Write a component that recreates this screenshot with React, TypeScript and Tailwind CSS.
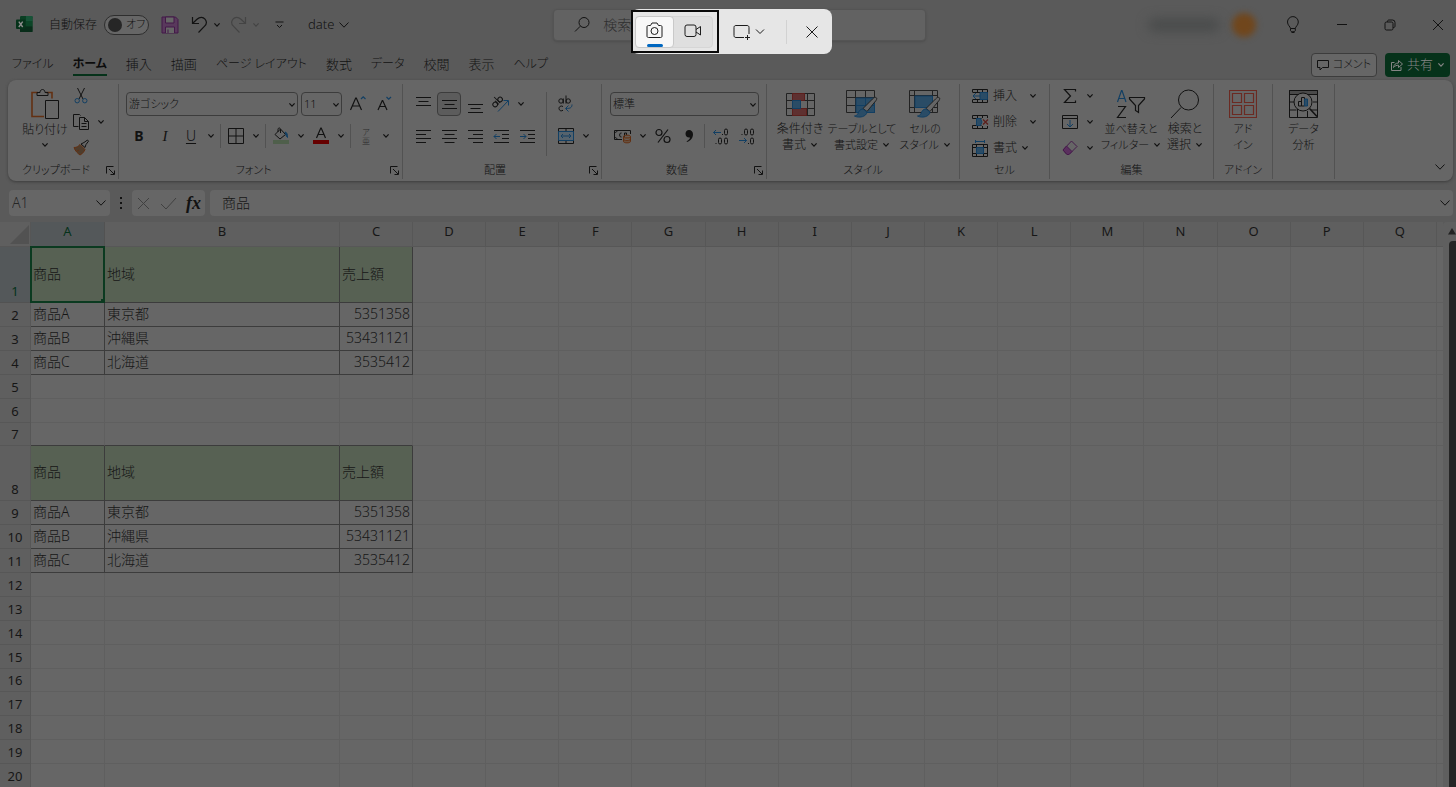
import React from "react";

type IconProps = { w?: number; h?: number; className?: string; children: React.ReactNode; sw?: number };

function Icon({ w = 16, h = 16, className = "", children, sw = 1 }: IconProps) {
  return (
    <svg
      width={w}
      height={h}
      viewBox={`0 0 ${w} ${h}`}
      fill="none"
      stroke="currentColor"
      strokeWidth={sw}
      className={`shrink-0 ${className}`}
      aria-hidden="true"
    >
      {children}
    </svg>
  );
}

const BLUE = "#123f63";
const BLUE_FILL = "#2a4c66";
const RED = "#5c1f1c";
const RED_FILL = "#5e3030";
const ORANGE = "#633012";

function Chevron({ className = "" }: { className?: string }) {
  return (
    <Icon w={8} h={6} sw={1.2} className={className}>
      <path d="M1.4 1.4 4 4.2 6.6 1.4" />
    </Icon>
  );
}

function BigChevron({ className = "" }: { className?: string }) {
  return (
    <Icon w={12} h={8} className={className}>
      <path d="M1.5 1.5 6 6.2 10.5 1.5" />
    </Icon>
  );
}

function ToolButton({ label, children, on = false }: { label: string; children: React.ReactNode; on?: boolean }) {
  return (
    <button
      type="button"
      aria-label={label}
      aria-pressed={on}
      className={
        on
          ? "mx-px flex h-6 w-6 items-center justify-center rounded border border-[#3c3c3c] bg-[#5c5c5c]"
          : "flex h-6 w-[26px] items-center justify-center"
      }
    >
      {children}
    </button>
  );
}

function DropButton({ label }: { label: string }) {
  return (
    <button type="button" aria-label={label} className="flex h-6 w-3.5 items-center justify-center">
      <Chevron />
    </button>
  );
}

function Separator({ tall = false }: { tall?: boolean }) {
  return <div className={tall ? "mx-1.5 h-16 w-px bg-[#525252]" : "mx-0.5 h-6 w-px bg-[#525252]"} />;
}

function Group({
  label,
  width,
  launcher = false,
  children,
}: {
  label: string;
  width: string;
  launcher?: boolean;
  children: React.ReactNode;
}) {
  return (
    <section aria-label={label || "データ分析"} className={`flex shrink-0 flex-col border-r border-[#525252] ${width}`}>
      <div className="flex h-[77px] justify-center">{children}</div>
      <div className="flex h-[18px] items-center">
        <span className="flex-1 text-center text-[11px] leading-4">{label}</span>
        {launcher && (
          <button type="button" aria-label={`${label}の設定`} className="mr-0.5 flex h-3 w-3 items-center justify-center">
            <Icon w={9} h={9}>
              <path d="M.5 7.500V.5H7.500M3 3 8 8M8.500 4.500v4H4.500" />
            </Icon>
          </button>
        )}
      </div>
    </section>
  );
}

function LargeButton({
  icon,
  lines,
  drop = false,
  width,
  kana = false,
}: {
  icon: React.ReactNode;
  lines: [string, string];
  drop?: boolean;
  width: string;
  kana?: boolean;
}) {
  return (
    <button
      type="button"
      className={`flex shrink-0 flex-col items-center pt-1 leading-4 whitespace-nowrap ${kana ? "text-[11px]" : "text-xs"} ${width}`}
    >
      <span className="flex h-[31px] items-center justify-center">{icon}</span>
      <span className="mt-0.5 leading-4">{lines[0]}</span>
      <span className="flex items-center gap-1">
        {lines[1]}
        {drop && <Chevron />}
      </span>
    </button>
  );
}

/* ---------- drawings ---------- */

function ExcelLogo() {
  return (
    <Icon w={17} h={17}>
      <rect x="4" y="0" width="12.500" height="16" rx="1.200" fill="#0a3f23" stroke="none" />
      <rect x="10" y="0" width="6.500" height="5" fill="#175337" stroke="none" />
      <rect x="10" y="5" width="6.500" height="5.500" fill="#0c4527" stroke="none" />
      <rect x="4" y="10.500" width="12.500" height="5.500" fill="#082c19" stroke="none" />
      <rect x="0" y="3.500" width="9.500" height="9.500" rx="1" fill="#06321a" stroke="none" />
      <path d="M2.800 5.600 6.700 11M6.700 5.600 2.800 11" stroke="#8c8c8c" strokeWidth="1.400" />
    </Icon>
  );
}

const alignPaths = {
  top: "M1 1.500h15M3.500 5.500h10M1 9.500h15",
  middle: "M1 4.500h15M3.500 8.500h10M1 12.500h15",
  bottom: "M1 8.500h15M3.500 12.500h10M1 16.500h15",
  left: "M1 2.500h15M1 6.500h10M1 10.500h15M1 14.500h10",
  center: "M1 2.500h15M3.500 6.500h10M1 10.500h15M3.500 14.500h10",
  right: "M1 2.500h15M6 6.500h10M1 10.500h15M6 14.500h10",
};

function AlignIcon({ kind }: { kind: keyof typeof alignPaths }) {
  return (
    <Icon w={17} h={17}>
      <path d={alignPaths[kind]} />
    </Icon>
  );
}

function IndentIcon({ out = false }: { out?: boolean }) {
  return (
    <Icon w={17} h={17}>
      <path d="M1 2.500h15M9 6.500h7M9 10.500h7M1 14.500h15" />
      <path stroke={BLUE} d={out ? "M7 8.500H1M3.500 6 1 8.500 3.500 11" : "M1 8.500h6M4.500 6 7 8.500 4.500 11"} />
    </Icon>
  );
}

function CondFormatIcon() {
  return (
    <Icon w={29} h={26} className="text-[#222]">
      <path d="M.5 2.500h28v22H.5zM.5 9.500h28M.5 17.500h28M6.500 2.500v22M21.500 2.500v22" />
      <path fill={RED_FILL} stroke={RED} d="M6.500 2.500h12v7h-12zM6.500 17.500h14v7h-14z" />
      <path fill={BLUE_FILL} stroke={BLUE} d="M6.500 9.500h8v8h-8z" />
    </Icon>
  );
}

function Brush() {
  return (
    <g>
      <path fill="#666" stroke="#222" d="M30 8.500c1 .5 1 1.500 0 3l-9 11-4-3 9.500-9.500c1.500-1.500 2.500-2 3.500-1.500Z" />
      <path fill={BLUE_FILL} stroke={BLUE} d="M17 20c-3 0-4 2-5 4.500-.8 1.800-2 2.200-3.500 2.500 5 2.500 12 .5 12.500-4Z" />
    </g>
  );
}

function TableFormatIcon() {
  return (
    <Icon w={32} h={30} className="text-[#222]">
      <path d="M.5 1.500h28v22H.5zM.5 8.500h28M.5 16.500h28M9.500 1.500v22M19.500 1.500v22" />
      <path fill={BLUE_FILL} stroke={BLUE} d="M10 9h18.500v14.500H10zM19.500 9v14M10 16.500h18" />
      <Brush />
    </Icon>
  );
}

function CellStyleIcon() {
  return (
    <Icon w={32} h={30} className="text-[#222]">
      <path d="M.5 1.500h28v22H.5zM.5 6.500h28M.5 18.500h28M5.500 1.500v22M23.500 1.500v22" />
      <path fill={BLUE_FILL} stroke={BLUE} d="M6 7h17.500v11.500H6z" />
      <Brush />
    </Icon>
  );
}

function CellOpIcon({ kind }: { kind: "insert" | "delete" | "format" }) {
  return (
    <Icon w={17} h={17}>
      {kind === "insert" && (
        <>
          <path d="M.5 4V1.500h15v13H.5V12M5.500 1.500v3M10.500 1.500v13M.5 11.500h15M5.500 11v3.500M.5 4.500h15" />
          <path fill={BLUE_FILL} stroke={BLUE} d="M8 4.500h7.500v7H8z" />
          <path stroke={BLUE} d="M8 8H1M4 5 1 8l3 3" />
        </>
      )}
      {kind === "delete" && (
        <>
          <path d="M.5 1.500h15V4M.5 14.500h15V12M.5 1.500v3h9M.5 14.500v-3h9M5.500 1.500v13M10.500 1.500V4M10.500 12v2.500" />
          <path fill={BLUE_FILL} stroke={BLUE} d="M4.500 4.500h4L10 8l-1.500 3.500h-4z" />
          <path stroke={RED} strokeWidth="1.300" d="m11 5.500 5 5M16 5.500l-5 5" />
        </>
      )}
      {kind === "format" && (
        <>
          <path d="M.5 4.500h15v12H.5zM.5 7.500h15M.5 13.500h15M4.500 4.500v12M11.500 4.500v12" />
          <path fill={BLUE_FILL} stroke={BLUE} d="M4.500 7.500h7v6h-7z" />
          <path stroke={BLUE} d="M3.500 1.500h9M3.500 0v3M12.500 0v3" />
        </>
      )}
    </Icon>
  );
}

function ColorA() {
  return (
    <Icon w={18} h={18}>
      <path strokeWidth="1.200" d="M4.500 11 8.800 1h.4l4.300 10M6 7.500h6" />
      <path fill="#660000" stroke="none" d="M1 13h16v4H1z" />
    </Icon>
  );
}

/* ---------- page sections ---------- */

function TitleBar() {
  return (
    <header className="flex h-[49px] shrink-0 items-center">
      <div className="flex w-[38%] shrink-0 items-center pl-4">
        <ExcelLogo />
        <label className="ml-4 flex items-center gap-[7px] text-xs">
          自動保存
          <input type="checkbox" role="switch" className="peer sr-only" />
          <span className="flex h-5 w-[45px] items-center gap-1 rounded-full border border-[#2e2e2e] bg-[#666] pl-[3px] text-[11px]">
            <span className="h-3.5 w-3.5 rounded-full bg-[#262626]" />
            オフ
          </span>
        </label>
        <button type="button" aria-label="上書き保存" className="ml-3">
          <Icon w={18} h={18} className="text-[#431948]">
            <path fill="#59395c" d="M1 1h13.500L17 3.500V17H1z" />
            <path fill="#666" d="M4.500 1h8.500v6H4.500zM4.500 17v-6h9v6" />
            <path d="M7 17v-3.500" />
          </Icon>
        </button>
        <button type="button" aria-label="元に戻す" className="ml-3">
          <Icon w={17} h={18} sw={1.2}>
            <path d="M1.500 1v6.500H8M1.500 7.500 6 3.200c3-2.600 6.200-2.200 8 0 1.900 2.300 1.600 5-.4 7L7.500 16.500" />
          </Icon>
        </button>
        <span className="ml-0.5 flex"><DropButton label="元に戻す履歴" /></span>
        <button type="button" aria-label="やり直し" className="ml-1.5 text-[#444]">
          <Icon w={17} h={18} sw={1.2}>
            <path d="M15.500 1v6.500H9M15.500 7.500 11 3.200c-3-2.600-6.200-2.200-8 0-1.900 2.300-1.600 5 .4 7L9.500 16.500" />
          </Icon>
        </button>
        <span className="ml-0.5 flex text-[#444]"><DropButton label="やり直し履歴" /></span>
        <button type="button" aria-label="クイック アクセスのカスタマイズ" className="ml-3">
          <Icon w={9} h={8}>
            <path d="M.5 1h8M2 4l2.500 2.500L7 4" />
          </Icon>
        </button>
        <button type="button" className="ml-6 flex items-center gap-1 text-[13px]">
          date
          <BigChevron />
        </button>
      </div>
      <label className="flex h-8 w-[25.6%] shrink-0 items-center gap-3 rounded border border-[#545454] bg-[#626262] pl-5 shadow-sm">
        <Icon w={17} h={17}>
          <circle cx="10" cy="6.500" r="5" />
          <path d="M6.300 10.200 1 15.500" />
        </Icon>
        <input type="search" aria-label="検索" placeholder="検索" className="w-full bg-transparent text-sm text-[#2b2b2b] outline-none placeholder:text-[#2e2e2e]" />
      </label>
      <div className="flex flex-1 items-center justify-end pr-3">
        <div className="mr-3 h-3 w-[72px] rounded-full bg-[#484a4a] blur-[6px]" />
        <div className="mr-[30px] h-6 w-6 rounded-full bg-[#70461c] blur-[3px]" />
        <button type="button" aria-label="ヒント" className="mr-9">
          <Icon w={14} h={18}>
            <path d="M4.500 12.500C4.300 10.500 1.500 9.300 1.500 6a5.300 5.300 0 0 1 10.800 0c0 3.300-2.800 4.500-3 6.500ZM4.500 12.500v2.200c0 1.500 4.800 1.500 4.800 0v-2.200M5.500 16.500h3" />
          </Icon>
        </button>
        <button type="button" aria-label="最小化" className="mr-9">
          <Icon w={12} h={12}><path d="M1 5.500h10" /></Icon>
        </button>
        <button type="button" aria-label="元のサイズに戻す" className="mr-9">
          <Icon w={12} h={12}>
            <rect x="1" y="3" width="8" height="8" rx="1.500" />
            <path d="M3.500 3V2.500C3.500 1.500 4 1 5 1h3.500A2.500 2.500 0 0 1 11 3.500V7c0 1-.5 1.500-1.500 1.500H9" />
          </Icon>
        </button>
        <button type="button" aria-label="閉じる">
          <Icon w={12} h={12}><path d="m1 1 10 10M11 1 1 11" /></Icon>
        </button>
      </div>
    </header>
  );
}

const tabs = [
  { name: "ファイル", kana: true },
  { name: "ホーム", kana: true, current: true },
  { name: "挿入" },
  { name: "描画" },
  { name: "ページ レイアウト", kana: true },
  { name: "数式" },
  { name: "データ", kana: true },
  { name: "校閲" },
  { name: "表示" },
  { name: "ヘルプ", kana: true },
];

function TabRow() {
  return (
    <div className="flex h-[31px] shrink-0 items-center justify-between pr-1.5 pl-3">
      <nav aria-label="リボン タブ" className="flex items-center gap-[19px] leading-5">
        {tabs.map((t) => (
          <a
            key={t.name}
            href="#"
            aria-current={t.current ? "page" : undefined}
            className={`border-b-2 ${t.kana ? "text-xs" : "text-[13px]"} leading-5 ${
              t.current ? "border-[#06321a] font-bold text-[#0c0c0c]" : "border-transparent"
            }`}
          >
            {t.name}
          </a>
        ))}
      </nav>
      <div className="flex items-center gap-2 text-[13px]">
        <button type="button" className="flex h-6 w-[66px] items-center justify-center gap-1 rounded border border-[#3c3c3c] bg-[#666] text-[11px] whitespace-nowrap">
          <Icon w={12} h={12}>
            <path d="M.5 1.500h11v7H5.500L3 11V8.500H.5z" />
          </Icon>
          コメント
        </button>
        <button type="button" className="flex h-6 w-[65px] items-center justify-center gap-1 rounded bg-[#06321a] whitespace-nowrap text-[#858585]">
          <Icon w={13} h={13}>
            <path d="M4.500 4.500h-3v8h9.500V9M3.500 9.500c.5-3 2.200-4.500 5-4.500V2.500l4 3.500-4 3.500V7.200c-2 0-3.500.6-5 2.300Z" />
          </Icon>
          共有
          <Chevron />
        </button>
      </div>
    </div>
  );
}

function SelectBox({ label, options, width }: { label: string; options: string[]; width: string }) {
  return (
    <span className={`relative flex ${width}`}>
      <select aria-label={label} className="h-6 w-full appearance-none rounded border border-[#3c3c3c] bg-transparent pl-0.5 text-[11px] outline-none">
        {options.map((o) => (
          <option key={o}>{o}</option>
        ))}
      </select>
      <Chevron className="pointer-events-none absolute top-2.5 right-0.5" />
    </span>
  );
}

function Ribbon() {
  return (
    <div className="mr-[3px] ml-2 flex h-[101px] shrink-0 overflow-hidden rounded-lg bg-[#666] pt-1 pb-0.5 shadow-[0_1px_3px_#3d3d3d]">
      <Group label="クリップボード" width="w-[111px]" launcher>
        <div className="flex w-full pl-3.5">
          <button type="button" className="flex w-[46px] flex-col items-center pt-1 text-xs leading-4 whitespace-nowrap">
            <Icon w={30} h={32}>
              <path stroke={ORANGE} strokeWidth="1.600" d="M8 4.500H2v24h12M16 4.500h6v6" />
              <path d="M7 7.500V4.500h3c0-4 5-4 5 0h3v3z" />
              <path d="M15.500 12.500h13v18h-13z" />
            </Icon>
            <span className="mt-0.5">貼り付け</span>
            <Chevron className="mt-1" />
          </button>
          <div className="flex flex-col gap-0.5">
            <ToolButton label="切り取り">
              <Icon w={16} h={18}>
                <path d="M4.500 1 10 12M11.500 1 6 12" />
                <g stroke={BLUE}><circle cx="4.200" cy="13.700" r="2.200" /><circle cx="11.800" cy="13.700" r="2.200" /></g>
              </Icon>
            </ToolButton>
            <div className="flex">
              <ToolButton label="コピー">
                <Icon w={18} h={18}>
                  <path d="M6.500 13.500H1.500v-12h6l1 1M7.500 4.500h5l4 4v8h-9zM12.500 4.500v4h4M9.500 10.500h5M9.500 13.500h5" />
                </Icon>
              </ToolButton>
              <DropButton label="コピーのオプション" />
            </div>
            <ToolButton label="書式のコピー">
              <Icon w={18} h={18}>
                <path d="m9 5 3-1.500L15.500 1l1 1.200L14 5.500l-1 3Z" />
                <path fill="#4e3c2c" stroke={ORANGE} d="M2 8.500c3 0 4-1 6-3l5 5c-1 2-2 4-5 5.500C6 14.500 3 12 2 8.500ZM5 12l2-1" />
              </Icon>
            </ToolButton>
          </div>
        </div>
      </Group>

      <Group label="フォント" width="w-[284px]" launcher>
        <div className="flex w-full flex-col gap-2 pt-2 pl-[7px]">
          <div className="flex gap-[3px]">
            <SelectBox label="フォント名" options={["游ゴシック"]} width="w-[172px]" />
            <SelectBox label="フォント サイズ" options={["11"]} width="w-[41px]" />
            <div className="flex">
              <ToolButton label="フォント サイズの拡大">
                <Icon w={18} h={18} sw={1.2}>
                  <path d="M1.500 15 6.700 3h.6l5.200 12M3.500 11h7" />
                  <path stroke={BLUE} d="m12 4 2.200-2.200L16.500 4" />
                </Icon>
              </ToolButton>
              <ToolButton label="フォント サイズの縮小">
                <Icon w={16} h={18} sw={1.2}>
                  <path d="M2 15 6.300 5.500h.4L11 15M3.500 11.500h6" />
                  <path stroke={BLUE} d="m10.500 2 2.200 2.200L15 2" />
                </Icon>
              </ToolButton>
            </div>
          </div>
          <div className="flex">
            <ToolButton label="太字"><span className="text-sm font-bold">B</span></ToolButton>
            <ToolButton label="斜体"><span className="font-['Liberation_Serif',serif] text-[15px] italic">I</span></ToolButton>
            <ToolButton label="下線"><span className="text-sm underline underline-offset-2">U</span></ToolButton>
            <DropButton label="下線の種類" />
            <Separator />
            <ToolButton label="罫線">
              <Icon w={16} h={16}><path d="M.5.5h15v15H.5zM8 .5v15M.5 8h15" /></Icon>
            </ToolButton>
            <DropButton label="罫線の種類" />
            <Separator />
            <ToolButton label="塗りつぶしの色">
              <Icon w={18} h={18}>
                <path d="M3 7.500 8.500 2l5 5.500L8 12ZM6 5V2.500c0-2 2.500-2 2.500 0V6" />
                <path fill={BLUE} stroke={BLUE} d="M13 5c2 .5 2.500 2 2.500 5.500-1.500-1-1.500-3-2.500-5.500Z" />
                <path fill="#4f5f4b" stroke="none" d="M1 13h16v4H1z" />
              </Icon>
            </ToolButton>
            <DropButton label="塗りつぶしの色の選択" />
            <ToolButton label="フォントの色"><ColorA /></ToolButton>
            <DropButton label="フォントの色の選択" />
            <Separator />
            <ToolButton label="ふりがな">
              <span className="flex flex-col items-center text-[8px] leading-[9px] text-[#2c2c2c]">
                <span>ア</span>
                <span>亜</span>
              </span>
            </ToolButton>
            <DropButton label="ふりがなの設定" />
          </div>
        </div>
      </Group>

      <Group label="配置" width="w-[199px]" launcher>
        <div className="flex w-full pt-2 pl-[7px]">
          <div className="flex flex-col gap-2">
            <div className="flex">
              <ToolButton label="上揃え"><AlignIcon kind="top" /></ToolButton>
              <ToolButton label="上下中央揃え" on><AlignIcon kind="middle" /></ToolButton>
              <ToolButton label="下揃え"><AlignIcon kind="bottom" /></ToolButton>
              <ToolButton label="方向">
                <Icon w={18} h={18}>
                  <g transform="rotate(-45 6 8)">
                    <circle cx="3" cy="7" r="2.300" /><path d="M5.500 4.500v5M7.500 1v8.500" /><circle cx="10" cy="7" r="2.300" />
                  </g>
                  <path stroke={BLUE} d="M6 16.500 16 6M11.500 5.500H16.500V10.500" />
                </Icon>
              </ToolButton>
              <DropButton label="方向の種類" />
            </div>
            <div className="flex">
              <ToolButton label="左揃え"><AlignIcon kind="left" /></ToolButton>
              <ToolButton label="中央揃え"><AlignIcon kind="center" /></ToolButton>
              <ToolButton label="右揃え"><AlignIcon kind="right" /></ToolButton>
              <ToolButton label="インデントを減らす"><IndentIcon out /></ToolButton>
              <ToolButton label="インデントを増やす"><IndentIcon /></ToolButton>
            </div>
          </div>
          <Separator tall />
          <div className="flex flex-col gap-2">
            <ToolButton label="折り返して全体を表示する">
              <Icon w={18} h={18}>
                <circle cx="4" cy="6" r="2.200" /><path d="M6.300 3.500v5M9 .5v8" /><circle cx="11.200" cy="6" r="2.200" />
                <path d="M6 11.500c-2.200-1.200-4 0-4 2s2 3 4 1.800" />
                <path stroke={BLUE} d="M15 9.500c0 3-1.500 4-6 4M11.500 10.500l-3 3 3 3" />
              </Icon>
            </ToolButton>
            <div className="flex">
              <ToolButton label="セルを結合して中央揃え">
                <Icon w={16} h={16}>
                  <path d="M.5.5h15v15H.5zM.5 3.500h15M.5 12.500h15M8 .5v3M8 12.500v3" />
                  <path fill="#56636d" stroke={BLUE} d="M.5 3.500h15v9H.5zM3 8h10M5 6 3 8l2 2M11 6l2 2-2 2" />
                </Icon>
              </ToolButton>
              <DropButton label="結合の種類" />
            </div>
          </div>
        </div>
      </Group>

      <Group label="数値" width="w-[165px]" launcher>
        <div className="flex w-full flex-col gap-2 pt-2 pl-2">
          <SelectBox label="表示形式" options={["標準"]} width="w-[149px]" />
          <div className="flex">
            <ToolButton label="通貨表示形式">
              <Icon w={18} h={16}>
                <path d="M8 11.500H.5v-9h16V6M3 2.500c0 1.500-1 2-2.500 2M.5 9.500c1.500 0 2.500.5 2.500 2M7.500 5C5 4.500 5 9.500 7.500 9M10.500 9V5h2v2" />
                <path fill="#66503f" stroke={ORANGE} d="M9.500 8.500c0-1.800 7-1.800 7 0v5c0 1.800-7 1.800-7 0zM9.500 8.500c0 1.800 7 1.800 7 0M9.500 11c0 1.800 7 1.800 7 0" />
              </Icon>
            </ToolButton>
            <DropButton label="通貨の種類" />
            <ToolButton label="パーセント スタイル">
              <Icon w={16} h={16} sw={1.2}>
                <circle cx="4" cy="4.500" r="3" /><circle cx="12" cy="11.500" r="3" /><path d="M13 1.500 3 14.500" />
              </Icon>
            </ToolButton>
            <ToolButton label="桁区切りスタイル">
              <Icon w={10} h={14}>
                <path fill="currentColor" stroke="none" d="M5 1c2.300 0 4 1.700 4 4.300 0 3.500-2.300 6.500-6 7.700l-.4-.8c2-.9 3.200-2.100 3.400-3.700C3.300 9 1.500 7 1.500 4.800 1.500 2.500 3 1 5 1Z" />
              </Icon>
            </ToolButton>
            <Separator />
            <ToolButton label="小数点以下の表示桁数を増やす">
              <Icon w={17} h={17}>
                <path stroke={BLUE} d="M9 4.500H1.500M4 2 1.500 4.500 4 7" />
                <rect x="12.500" y="1" width="3" height="6" rx="1.500" /><path d="M10.500 6v1M4 15v1" />
                <rect x="6.500" y="10" width="3" height="6" rx="1.500" /><rect x="12.500" y="10" width="3" height="6" rx="1.500" />
              </Icon>
            </ToolButton>
            <ToolButton label="小数点以下の表示桁数を減らす">
              <Icon w={17} h={17}>
                <path stroke={BLUE} d="M1 12.500h7.500M6 10l2.500 2.500L6 15" />
                <rect x="6.500" y="1" width="3" height="6" rx="1.500" /><rect x="12.500" y="1" width="3" height="6" rx="1.500" />
                <path d="M4 6v1M10.500 15v1" /><rect x="12.500" y="10" width="3" height="6" rx="1.500" />
              </Icon>
            </ToolButton>
          </div>
        </div>
      </Group>

      <Group label="スタイル" width="w-[193px]">
        <LargeButton icon={<CondFormatIcon />} lines={["条件付き", "書式"]} drop width="w-[58px]" />
        <LargeButton icon={<TableFormatIcon />} lines={["テーブルとして", "書式設定"]} drop kana width="w-[66px]" />
        <LargeButton icon={<CellStyleIcon />} lines={["セルの", "スタイル"]} drop kana width="w-[60px]" />
      </Group>

      <Group label="セル" width="w-[90px]">
        <div className="flex w-full flex-col gap-0.5 pl-3 text-xs">
          <button type="button" className="flex h-6 items-center gap-1">
            <CellOpIcon kind="insert" />挿入<Chevron className="ml-2" />
          </button>
          <button type="button" className="flex h-6 items-center gap-1">
            <CellOpIcon kind="delete" />削除<Chevron className="ml-2" />
          </button>
          <button type="button" className="flex h-6 items-center gap-1">
            <CellOpIcon kind="format" />書式<Chevron />
          </button>
        </div>
      </Group>

      <Group label="編集" width="w-[164px]">
        <div className="flex w-full pl-[7px]">
          <div className="flex flex-col gap-0.5">
            <div className="flex">
              <ToolButton label="合計">
                <Icon w={15} h={16} sw={1.2}><path d="M12.500 3.500V1.500H1.500L7.500 8l-6 6.500h11v-2" /></Icon>
              </ToolButton>
              <DropButton label="集計方法" />
            </div>
            <div className="flex">
              <ToolButton label="フィル">
                <Icon w={16} h={16}>
                  <path d="M.5 1.500h15v13H.5zM.5 4.500h15" />
                  <path stroke={BLUE} d="M8 6v7M5 10l3 3 3-3" />
                </Icon>
              </ToolButton>
              <DropButton label="フィルの種類" />
            </div>
            <div className="flex">
              <ToolButton label="クリア">
                <Icon w={16} h={16} className="text-[#451b4a]">
                  <path d="M9.500 1 15 6.500 7 14.500H5L1 10Z" />
                  <path fill="#5a2f5e" d="M4.500 6 10 11.500l-3 3H5L1 10Z" />
                </Icon>
              </ToolButton>
              <DropButton label="クリアの種類" />
            </div>
          </div>
          <LargeButton
            width="w-[68px]"
            drop
            kana
            lines={["並べ替えと", "フィルター"]}
            icon={
              <Icon w={30} h={30} sw={1.2}>
                <path stroke={BLUE} d="M1.500 13 5.500 1.500h.5L10 13M3 9.500h5.500" />
                <path d="M2 17.500h7.500L1.500 28.500h8.500" />
                <path d="M13.500 8.500h15v1.500l-6 6.500v7l-3-2v-5l-6-6.500z" />
              </Icon>
            }
          />
          <LargeButton
            width="w-10"
            drop
            lines={["検索と", "選択"]}
            icon={
              <Icon w={30} h={30}>
                <circle cx="18.500" cy="11" r="10" />
                <path d="M11 18.500 1 29" />
              </Icon>
            }
          />
        </div>
      </Group>

      <Group label="アドイン" width="w-[59px]">
        <LargeButton
          width="w-[50px]"
          kana
          lines={["アド", "イン"]}
          icon={
            <Icon w={28} h={28} className="text-[#6b2a22]" sw={1.2}>
              <path d="M.5.5h27v27H.5zM3.500 3.500h9v9h-9zM15.500 3.500h9v9h-9zM3.500 15.500h9v9h-9zM15.500 15.500h9v9h-9z" />
            </Icon>
          }
        />
      </Group>

      <Group label="" width="w-[62px]">
        <LargeButton
          width="w-[50px]"
          kana
          lines={["データ", "分析"]}
          icon={
            <Icon w={29} h={28}>
              <path fill="#4a4a4a" d="M.5.5h28v4H.5z" />
              <path d="M.5.5h28v27H.5zM.5 12h5M.5 20h7M24 12h4.500M22 20h6.500M8.500 19v8.500M18.500 21v6.500" />
              <circle cx="14" cy="12" r="9" fill="#666" />
              <path d="M20.500 18.500 28 26.500" strokeWidth="1.500" />
              <path d="M9.500 11.500h3V16h-3zM12.500 7.500h3V16h-3z" />
              <path fill={BLUE_FILL} stroke={BLUE} d="M15.500 9h3v7h-3z" />
            </Icon>
          }
        />
      </Group>

      <div className="flex flex-1 items-end justify-end pr-[7px] pb-2">
        <button type="button" aria-label="リボンを折りたたむ"><BigChevron /></button>
      </div>
    </div>
  );
}

function FormulaBar() {
  return (
    <div className="mt-[9px] mb-1.5 flex h-[26px] shrink-0 items-stretch pr-[3px] pl-[9px]">
      <div className="flex w-[101px] items-center rounded bg-[#666] pr-[3px] pl-[3px]">
        <input aria-label="名前ボックス" defaultValue="A1" className="min-w-0 flex-1 bg-transparent text-sm text-[#262626] outline-none" />
        <button type="button" aria-label="名前の一覧"><BigChevron /></button>
      </div>
      <div className="flex w-[22px] items-center justify-center">
        <Icon w={4} h={14}>
          <path fill="currentColor" stroke="none" d="M1 1h2v2H1zM1 6h2v2H1zM1 11h2v2H1z" />
        </Icon>
      </div>
      <div className="flex w-[73px] items-center justify-between rounded bg-[#666] pr-1 pl-[5px]">
        <button type="button" aria-label="キャンセル" className="text-[#404040]">
          <Icon w={13} h={13}><path d="m1 1 11 11M12 1 1 12" /></Icon>
        </button>
        <button type="button" aria-label="入力" className="text-[#404040]">
          <Icon w={17} h={13}><path d="m1 7 5 5L16 1" /></Icon>
        </button>
        <button type="button" aria-label="関数の挿入" className="font-['Liberation_Serif',serif] text-lg leading-5 font-bold italic">
          fx
        </button>
      </div>
      <div className="ml-[5px] flex flex-1 items-center rounded bg-[#666] pr-0.5 pl-3">
        <input aria-label="数式バー" defaultValue="商品" className="min-w-0 flex-1 bg-transparent text-sm font-light text-[#161616] outline-none" />
        <button type="button" aria-label="数式バーの展開"><BigChevron /></button>
      </div>
    </div>
  );
}

const letters = "ABCDEFGHIJKLMNOPQ".split("");

const block = [
  ["商品", "地域", "売上額"],
  ["商品A", "東京都", "5351358"],
  ["商品B", "沖縄県", "53431121"],
  ["商品C", "北海道", "3535412"],
];

const cells: Record<number, string[]> = {
  1: block[0], 2: block[1], 3: block[2], 4: block[3],
  8: block[0], 9: block[1], 10: block[2], 11: block[3],
};

function rowHeight(n: number) {
  if (n === 1) return "h-14";
  if (n === 8) return "h-[55px]";
  if (n === 7 || n === 16) return "h-[23px]";
  return "h-6";
}

function cellClass(n: number, c: number) {
  const filled = n in cells && c < 3;
  const header = n === 1 || n === 8;
  const base = "relative border-r border-b px-0.5 pt-0 pb-0.5 leading-5 font-light ";
  if (!filled) return base + (n === 7 && c < 3 ? "border-r-[#5f5f5f] border-b-[#3c3c3c]" : "border-[#5f5f5f]");
  if (header) return base + "border-[#3c3c3c] bg-[#576153] text-left";
  return base + "border-[#3c3c3c] " + (c === 2 ? "text-right" : "text-left");
}

function Sheet() {
  return (
    <main className="flex min-h-0 flex-1 overflow-hidden">
      <div className="min-w-0 flex-1 overflow-hidden bg-[#666]">
        <table className="w-full table-fixed border-separate border-spacing-0 text-sm text-[#161616]">
          <colgroup>
            <col className="w-[31px]" />
            <col className="w-[74px]" />
            <col className="w-[235px]" />
            <col className="w-[73px]" />
            {letters.slice(3).map((l) => (
              <col key={l} />
            ))}
            <col className="w-1.5" />
          </colgroup>
          <thead>
            <tr className="h-[25px] bg-[#5f5f5f] text-[13px]">
              <th scope="col" aria-label="すべて選択" className="border-r border-b border-[#565656] p-0">
                <div className="flex justify-end pr-px">
                  <Icon w={19} h={19}><path fill="#525252" stroke="none" d="M19 0v19H0z" /></Icon>
                </div>
              </th>
              {letters.map((l) => (
                <th
                  key={l}
                  scope="col"
                  className={
                    l === "A"
                      ? "border-r border-b border-[#525252] bg-[#54585a] p-0 pb-1.5 leading-4 font-normal text-[#06321a]"
                      : "border-r border-b border-[#575757] p-0 pb-1.5 leading-4 font-normal"
                  }
                >
                  {l}
                </th>
              ))}
              <th className="border-b border-[#575757] p-0" />
            </tr>
          </thead>
          <tbody>
            {Array.from({ length: 20 }, (_, i) => i + 1).map((n) => (
              <tr key={n} className={rowHeight(n)}>
                <th
                  scope="row"
                  className={
                    n === 1
                      ? "border-r border-b border-[#525252] bg-[#54585a] p-0 pb-[3px] align-bottom text-[13px] leading-4 font-normal text-[#06321a]"
                      : "border-r border-b border-[#575757] bg-[#5f5f5f] p-0 pb-[3px] align-bottom text-[13px] leading-4 font-normal"
                  }
                >
                  {n}
                </th>
                {letters.map((l, c) => (
                  <td key={l} className={cellClass(n, c)}>
                    {cells[n]?.[c] ?? ""}
                    {n === 1 && c === 0 && (
                      <span className="pointer-events-none absolute -inset-px border-2 border-[#0b3a20]">
                        <span className="absolute -right-0.5 -bottom-0.5 h-1 w-1 bg-[#0b3a20]" />
                      </span>
                    )}
                  </td>
                ))}
                <td className="border-b border-[#5f5f5f] p-0" />
              </tr>
            ))}
          </tbody>
        </table>
      </div>
      <div className="flex w-[13px] shrink-0 flex-col items-end overflow-hidden rounded-tl bg-[#5f5f5f] pt-1.5">
        <Icon w={8} h={7} className="text-[#222]">
          <path fill="currentColor" stroke="none" d="M4 0 8 6.500H0z" />
        </Icon>
        <div className="mt-1.5 w-[7px] flex-1 rounded-tl bg-[#252525]" />
      </div>
    </main>
  );
}

function CaptureToolbar() {
  return (
    <div
      role="toolbar"
      aria-label="画面の切り取り"
      className="absolute top-[9px] left-1/2 -ml-[97px] flex h-[45px] w-[201px] items-center rounded-lg bg-[#e6e6e6] text-[#1c1c1c]"
    >
      <div className="flex h-[43px] w-[88px] items-center border-2 border-[#0a0a0a] pl-0.5">
        <div className="flex h-8 w-[78px] rounded border border-[#d6d6d6] bg-[#dfdfdf]">
          <button type="button" aria-label="スクリーンショット" className="-my-px -ml-px flex w-[39px] flex-col items-center justify-end rounded border border-[#c9c9c9] bg-[#f7f7f7]">
            <Icon w={17} h={17}>
              <path d="M1 5c0-1 .5-1.500 1.500-1.500h2L6 1h5l1.500 2.500h2c1 0 1.500.5 1.500 1.500v9c0 1-.5 1.500-1.500 1.500h-12C1.500 15.500 1 15 1 14z" />
              <circle cx="8.500" cy="9" r="3.500" />
            </Icon>
            <span className="mt-[5px] h-[3px] w-4 rounded-full bg-[#0067c0]" />
          </button>
          <button type="button" aria-label="録画" className="flex flex-1 items-center justify-center pb-0.5">
            <Icon w={18} h={14}>
              <rect x="1" y="1" width="11" height="11.500" rx="2" />
              <path d="m12 5.500 4.500-3v8.500L12 8" />
            </Icon>
          </button>
        </div>
      </div>
      <button type="button" aria-label="切り取りモード" className="ml-3.5 flex items-center gap-1">
        <Icon w={18} h={16}>
          <path d="M11 13.500H3c-1.300 0-2-.7-2-2v-8c0-1.300.7-2 2-2h11c1.300 0 2 .7 2 2V10M14.500 11v5M12 13.500h5" />
        </Icon>
        <Icon w={10} h={7}><path d="m1 1.500 4 4 4-4" /></Icon>
      </button>
      <div className="ml-[21px] h-6 w-px bg-[#d2d2d2]" />
      <button type="button" aria-label="閉じる" className="flex flex-1 items-center justify-center pl-1">
        <Icon w={12} h={12}><path d="m.5.5 11 11M11.500.5l-11 11" /></Icon>
      </button>
    </div>
  );
}

export default function App() {
  return (
    <div className="relative flex h-screen flex-col overflow-hidden bg-[#5a5a5a] font-['Noto_Sans','Noto_Sans_CJK_JP',sans-serif] font-light text-[#121212] [font-feature-settings:'palt']">
      <TitleBar />
      <TabRow />
      <Ribbon />
      <FormulaBar />
      <Sheet />
      <CaptureToolbar />
    </div>
  );
}
